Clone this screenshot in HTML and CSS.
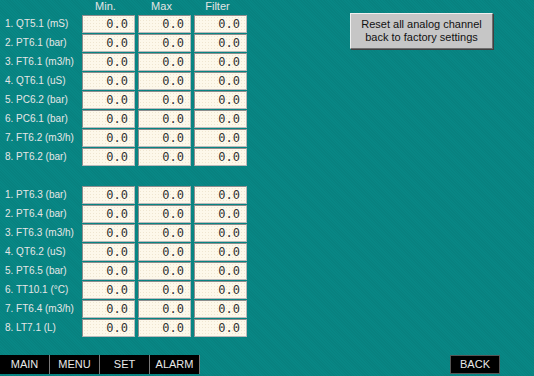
FILE: index.html
```html
<!DOCTYPE html>
<html lang="en">
<head>
  <meta charset="UTF-8" />
  <title>Analog Settings</title>
  <link rel="stylesheet" href="styles.css">
</head>
<body>
  <div class="screen">
    <div class="main">
      <div class="table">
        <div class="head">
          <span></span>
          <span class="col-title">Min.</span>
          <span class="col-title">Max</span>
          <span class="col-title">Filter</span>
        </div>
        <div class="group">
          <span class="label">1. QT5.1 (mS)</span><span class="val">0.0</span><span class="val">0.0</span><span class="val">0.0</span>
          <span class="label">2. PT6.1 (bar)</span><span class="val">0.0</span><span class="val">0.0</span><span class="val">0.0</span>
          <span class="label">3. FT6.1 (m3/h)</span><span class="val">0.0</span><span class="val">0.0</span><span class="val">0.0</span>
          <span class="label">4. QT6.1 (uS)</span><span class="val">0.0</span><span class="val">0.0</span><span class="val">0.0</span>
          <span class="label">5. PC6.2 (bar)</span><span class="val">0.0</span><span class="val">0.0</span><span class="val">0.0</span>
          <span class="label">6. PC6.1 (bar)</span><span class="val">0.0</span><span class="val">0.0</span><span class="val">0.0</span>
          <span class="label">7. FT6.2 (m3/h)</span><span class="val">0.0</span><span class="val">0.0</span><span class="val">0.0</span>
          <span class="label">8. PT6.2 (bar)</span><span class="val">0.0</span><span class="val">0.0</span><span class="val">0.0</span>
        </div>
        <div class="group second">
          <span class="label">1. PT6.3 (bar)</span><span class="val">0.0</span><span class="val">0.0</span><span class="val">0.0</span>
          <span class="label">2. PT6.4 (bar)</span><span class="val">0.0</span><span class="val">0.0</span><span class="val">0.0</span>
          <span class="label">3. FT6.3 (m3/h)</span><span class="val">0.0</span><span class="val">0.0</span><span class="val">0.0</span>
          <span class="label">4. QT6.2 (uS)</span><span class="val">0.0</span><span class="val">0.0</span><span class="val">0.0</span>
          <span class="label">5. PT6.5 (bar)</span><span class="val">0.0</span><span class="val">0.0</span><span class="val">0.0</span>
          <span class="label">6. TT10.1 (°C)</span><span class="val">0.0</span><span class="val">0.0</span><span class="val">0.0</span>
          <span class="label">7. FT6.4 (m3/h)</span><span class="val">0.0</span><span class="val">0.0</span><span class="val">0.0</span>
          <span class="label">8. LT7.1 (L)</span><span class="val">0.0</span><span class="val">0.0</span><span class="val">0.0</span>
        </div>
      </div>
      <div class="reset">Reset all analog channel<br>back to factory settings</div>
    </div>
    <div class="footer">
      <div class="nav">
        <span class="nav-btn">MAIN</span>
        <span class="nav-btn">MENU</span>
        <span class="nav-btn">SET</span>
        <span class="nav-btn">ALARM</span>
      </div>
      <span class="nav-btn back">BACK</span>
    </div>
  </div>
</body>
</html>
```

FILE: styles.css
```css
body {
  margin: 0;
  background: #088785;
  font-family: 'Liberation Sans', Arial, sans-serif;
}
.screen {
  width: 534px;
  height: 376px;
  display: flex;
  flex-direction: column;
  background-color: #088785;
  background-image: repeating-linear-gradient(45deg, rgba(0, 0, 0, 0.04) 0 1px, transparent 1px 2px);
}
.main {
  display: flex;
  align-items: flex-start;
}
.head,
.group {
  display: grid;
  grid-template-columns: 79px 53px 53px 53px;
  column-gap: 3px;
}
.head {
  height: 15px;
  align-items: start;
}
.col-title {
  color: #e4e4e4;
  font-size: 11px;
  text-align: center;
  padding-right: 6px;
  line-height: 12px;
}
.group {
  row-gap: 1px;
  grid-auto-rows: 18px;
}
.second {
  margin-top: 20px;
}
.label {
  color: #e6e6e6;
  font-size: 10px;
  padding-left: 5px;
  line-height: 18px;
  white-space: nowrap;
}
.val {
  background-color: #fdf8ea;
  background-image: radial-gradient(rgba(180, 150, 90, 0.18) 0.5px, transparent 0.8px);
  background-size: 3px 3px;
  border: 1px solid #b9b9b9;
  border-top-color: #8d8d8d;
  border-left-color: #8d8d8d;
  font-family: 'DejaVu Sans Mono', monospace;
  font-size: 12px;
  color: #333;
  text-align: right;
  padding-right: 6px;
  line-height: 16px;
}
.reset {
  margin-left: 103px;
  margin-top: 13px;
  width: 143px;
  height: 36px;
  box-sizing: border-box;
  background: #c6c6c6;
  border: 1px solid #6e6e6e;
  border-top-color: #f0f0f0;
  border-left-color: #f0f0f0;
  box-shadow: 1px 1px 0 #404040;
  color: #111;
  font-size: 11px;
  line-height: 13px;
  text-align: center;
  padding-top: 4px;
}
.footer {
  margin-top: auto;
  margin-bottom: 2px;
  display: flex;
  justify-content: space-between;
  height: 19px;
}
.nav {
  display: flex;
}
.nav-btn {
  width: 50px;
  box-sizing: border-box;
  background: #000;
  color: #e8e8e8;
  font-size: 11px;
  line-height: 19px;
  text-align: center;
  border-right: 1px solid #7a7a7a;
}
.back {
  margin-right: 34px;
  border: 1px solid #555;
  line-height: 17px;
}
```
